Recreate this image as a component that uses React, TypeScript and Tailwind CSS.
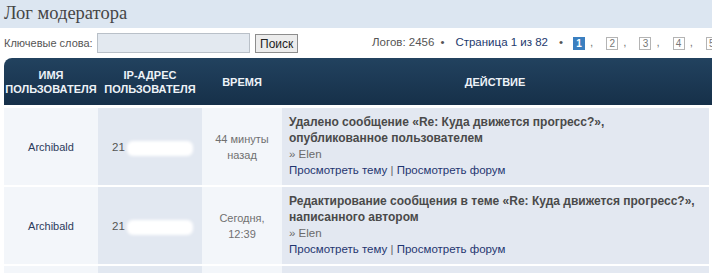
type LogRow = {
  user: string;
  ip: string;
  time: [string, string];
  action: [string, string];
  author: string;
};

const rows: LogRow[] = [
  {
    user: "Archibald",
    ip: "21",
    time: ["44 минуты", "назад"],
    action: ["Удалено сообщение «Re: Куда движется прогресс?»,", "опубликованное пользователем"],
    author: "Elen",
  },
  {
    user: "Archibald",
    ip: "21",
    time: ["Сегодня,", "12:39"],
    action: ["Редактирование сообщения в теме «Re: Куда движется прогресс?»,", "написанного автором"],
    author: "Elen",
  },
];

function PageBox({ n, active }: { n: number; active?: boolean }) {
  return (
    <span className="flex items-center">
      <span
        className={
          active
            ? "w-[12px] h-[13px] flex items-center justify-center text-[10px] font-bold text-white bg-[#3b7fc0]"
            : "w-[12px] h-[13px] flex items-center justify-center text-[10px] text-[#777] border border-[#b4b4b4]"
        }
      >
        {n}
      </span>
      <span className="ml-[5px] mr-[13px] text-[#777]">,</span>
    </span>
  );
}

export default function App() {
  return (
    <div className="w-[712px] h-[273px] overflow-hidden bg-white font-['Liberation_Sans',Arial,sans-serif] text-[11.5px]">
      <div className="h-[28px] bg-[#dce6f1] px-1 flex items-center font-['Liberation_Serif',serif] text-[18.5px] text-[#454545]">
        Лог модератора
      </div>

      <div className="h-[30px] flex items-center whitespace-nowrap overflow-hidden">
        <div className="w-[372px] flex items-center pl-1 shrink-0">
          <span className="text-[11px] text-[#555] w-[93px]">Ключевые слова:</span>
          <input className="w-[153px] h-[20px] bg-[#e3e9f0] border border-[#b9c0c8]" />
          <button className="ml-[5px] h-[19px] px-[4px] bg-[#ececec] border border-[#8d8d8d] text-[12px] text-[#222]">
            Поиск
          </button>
        </div>
        <div className="flex items-center text-[#555] shrink-0">
          <span>Логов: 2456</span>
          <span className="ml-[6px] mr-[11px]">•</span>
          <span className="text-[#1e3a6e]">Страница 1 из 82</span>
          <span className="ml-[11px] mr-[10px]">•</span>
          <PageBox n={1} active />
          <PageBox n={2} />
          <PageBox n={3} />
          <PageBox n={4} />
          <PageBox n={5} />
        </div>
      </div>

      <div className="pl-1">
        <div className="h-[47px] rounded-tl-[8px] bg-gradient-to-b from-[#22425f] to-[#163049] grid grid-cols-[94px_104px_80px_1fr] text-[11px] text-[#eef3f8] font-bold uppercase leading-[14px] text-center">
          <div className="flex items-center justify-center">
            Имя
            <br />
            пользователя
          </div>
          <div className="flex items-center justify-center">
            IP-адрес
            <br />
            пользователя
          </div>
          <div className="flex items-center justify-center">Время</div>
          <div className="flex items-center justify-center pr-1">Действие</div>
        </div>

        <div className="w-[705px] flex flex-col gap-[2px] mt-[3px]">
          {rows.map((r, i) => (
            <div key={i} className="grid grid-cols-[94px_104px_80px_1fr] min-h-[77px] leading-[16px]">
              <div className="bg-[#f3f6fa] flex items-center justify-center text-[11px] text-[#2c3b5c]">{r.user}</div>
              <div className="bg-[#e2e8f1] flex items-center pl-[14px] text-[#555]">
                {r.ip}
                <span className="inline-block w-[66px] h-[15px] ml-[2px] mt-[3px] bg-white rounded-[6px] blur-[1.5px]" />
              </div>
              <div className="bg-[#f3f6fa] flex flex-col items-center justify-center text-[11px] text-[#707070]">
                <span>{r.time[0]}</span>
                <span>{r.time[1]}</span>
              </div>
              <div className="bg-[#e3e8f1] py-[6px] pl-[7px] flex flex-col">
                <span className="text-[12px] font-bold text-[#4a4a4a]">{r.action[0]}</span>
                <span className="text-[12px] font-bold text-[#4a4a4a]">{r.action[1]}</span>
                <span className="text-[#6a6a6a]">» {r.author}</span>
                <span className="text-[#1f3570]">
                  Просмотреть тему <span className="text-[#666]">|</span> Просмотреть форум
                </span>
              </div>
            </div>
          ))}
          <div className="grid grid-cols-[94px_104px_80px_1fr] h-[20px]">
            <div className="bg-[#f3f6fa]" />
            <div className="bg-[#e2e8f1]" />
            <div className="bg-[#f3f6fa]" />
            <div className="bg-[#e3e8f1]" />
          </div>
        </div>
      </div>
    </div>
  );
}
